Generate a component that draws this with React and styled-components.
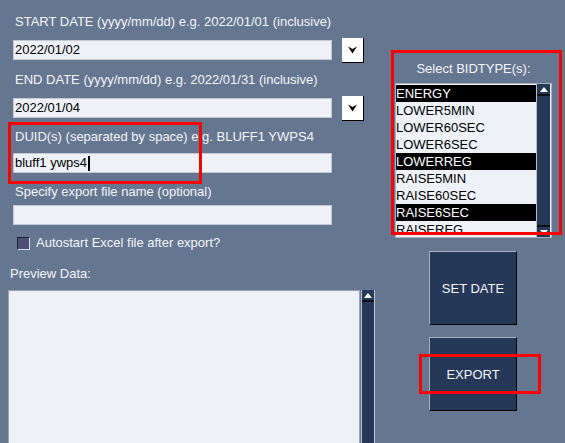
import React from 'react';
import styled, { createGlobalStyle } from 'styled-components';

const Global = createGlobalStyle`
  html, body { margin: 0; padding: 0; background: #657690; }
  body { font-family: "Liberation Sans", Arial, sans-serif; font-size: 13px; overflow: hidden; }
`;

const Page = styled.div`
  position: relative;
  width: 565px;
  height: 443px;
  overflow: hidden;
  background: #657690;
  display: grid;
  grid-template-columns: 380px 185px;
`;

const LeftCol = styled.div`
  display: flex;
  flex-direction: column;
`;

const RightCol = styled.div`
  display: flex;
  flex-direction: column;
`;

const Label = styled.div`
  color: #f3f5f8;
  line-height: 16px;
  height: 16px;
  white-space: nowrap;
  margin-top: ${p => p.$mt}px;
  padding-left: ${p => p.$pl ?? 15}px;
`;

const FieldRow = styled.div`
  display: flex;
  align-items: center;
  gap: 10px;
  height: 20px;
  margin-top: ${p => p.$mt}px;
  padding-left: 13px;
`;

const TextBox = styled.div`
  box-sizing: border-box;
  width: 319px;
  height: 20px;
  background: #eef1f6;
  border: 1px solid #c3c8d1;
  padding: 0 1px;
  line-height: 18px;
  color: #000;
  white-space: nowrap;
  display: flex;
  align-items: center;
`;

const Caret = styled.span`
  display: inline-block;
  width: 2px;
  height: 15px;
  background: #000;
  margin-left: 1px;
`;

const DropButton = styled.div`
  box-sizing: border-box;
  flex: none;
  width: 22px;
  height: 25px;
  background: #fff;
  border-right: 1px solid #000;
  border-bottom: 1px solid #000;
  display: flex;
  align-items: center;
  justify-content: center;
`;

const CheckRow = styled.div`
  display: flex;
  align-items: center;
  gap: 6px;
  height: 16px;
  margin-top: ${p => p.$mt}px;
  padding-left: 17px;
  color: #f3f5f8;
  line-height: 16px;
  white-space: nowrap;
`;

const CheckBox = styled.span`
  box-sizing: border-box;
  width: 13px;
  height: 13px;
  background: #4e4f74;
  border-top: 1px solid #1f2230;
  border-left: 1px solid #1f2230;
  border-right: 1px solid #d8dde6;
  border-bottom: 1px solid #d8dde6;
`;

const PreviewWrap = styled.div`
  display: flex;
  gap: 1px;
  margin-top: ${p => p.$mt}px;
  padding-left: 8px;
  height: 200px;
`;

const TextArea = styled.div`
  box-sizing: border-box;
  width: 352px;
  background: #eef1f6;
  border: 1px solid #9aa3b0;
`;

const ScrollBar = styled.div`
  box-sizing: border-box;
  flex: none;
  width: ${p => p.$w}px;
  background: #263857;
  border-left: 1px solid #b9c1cc;
  border-right: 1px solid ${p => p.$rb || '#c3cad4'};
  display: flex;
  flex-direction: column;
  justify-content: space-between;
`;

const ArrowBtn = styled.div`
  height: 10px;
  display: flex;
  align-items: center;
  justify-content: center;
  background: #263857;
  border-${p => (p.$down ? 'top' : 'bottom')}: 2px solid #0d0f14;
`;

const BidPanel = styled.div`
  display: flex;
  flex-direction: column;
  align-items: center;
  margin-left: 15px;
  width: 157px;
`;

const PanelLabel = styled.div`
  color: #f3f5f8;
  line-height: 16px;
  height: 16px;
  margin-top: 61px;
  white-space: nowrap;
`;

const ListBox = styled.div`
  box-sizing: border-box;
  margin-top: 6px;
  width: 157px;
  height: 155px;
  border: 1px solid #a8b0bd;
  background: #eef1f6;
  display: flex;
  overflow: hidden;
`;

const Items = styled.div`
  flex: 1;
  padding-top: 1px;
  overflow: hidden;
`;

const Item = styled.div`
  height: 17px;
  line-height: 17px;
  white-space: nowrap;
  background: ${p => (p.$sel ? '#000' : 'transparent')};
  color: ${p => (p.$sel ? '#fff' : '#000')};
`;

const ActionButton = styled.div`
  box-sizing: border-box;
  width: 88px;
  height: 74px;
  margin-left: 49px;
  margin-top: ${p => p.$mt}px;
  background: #263857;
  border-top: 1px solid #a7b0c1;
  border-left: 1px solid #a7b0c1;
  border-right: 1px solid #000;
  border-bottom: 1px solid #000;
  color: #f4f6fc;
  display: flex;
  align-items: center;
  justify-content: center;
  white-space: nowrap;
`;

const Highlight = styled.div`
  position: absolute;
  box-sizing: border-box;
  border: 3px solid #ff0000;
  left: ${p => p.$x}px;
  top: ${p => p.$y}px;
  width: ${p => p.$w}px;
  height: ${p => p.$h}px;
  pointer-events: none;
`;

const DownChevron = () => (
  <svg width="9" height="8" viewBox="0 0 9 8">
    <polygon points="0,0.5 4.5,3 9,0.5 4.5,7.5" fill="#000" />
  </svg>
);

const UpTri = () => (
  <svg width="8" height="5" viewBox="0 0 8 5">
    <polygon points="0,5 4,0 8,5" fill="#fff" />
  </svg>
);

const DownTri = () => (
  <svg width="8" height="5" viewBox="0 0 8 5">
    <polygon points="0,0 4,5 8,0" fill="#fff" />
  </svg>
);

const bidTypes = [
  { name: 'ENERGY', sel: true },
  { name: 'LOWER5MIN' },
  { name: 'LOWER60SEC' },
  { name: 'LOWER6SEC' },
  { name: 'LOWERREG', sel: true },
  { name: 'RAISE5MIN' },
  { name: 'RAISE60SEC' },
  { name: 'RAISE6SEC', sel: true },
  { name: 'RAISEREG' },
];

export default function App() {
  return (
    <>
      <Global />
      <Page>
        <LeftCol>
          <Label $mt={14}>START DATE (yyyy/mm/dd) e.g. 2022/01/01 (inclusive)</Label>
          <FieldRow $mt={10}>
            <TextBox>2022/01/02</TextBox>
            <DropButton><DownChevron /></DropButton>
          </FieldRow>
          <Label $mt={12}>END DATE (yyyy/mm/dd) e.g. 2022/01/31 (inclusive)</Label>
          <FieldRow $mt={10}>
            <TextBox>2022/01/04</TextBox>
            <DropButton><DownChevron /></DropButton>
          </FieldRow>
          <Label $mt={11}>DUID(s) (separated by space) e.g. BLUFF1 YWPS4</Label>
          <FieldRow $mt={8}>
            <TextBox>bluff1 ywps4<Caret /></TextBox>
          </FieldRow>
          <Label $mt={11}>Specify export file name (optional)</Label>
          <FieldRow $mt={5}>
            <TextBox />
          </FieldRow>
          <CheckRow $mt={10}>
            <CheckBox />
            Autostart Excel file after export?
          </CheckRow>
          <Label $mt={15} $pl={10}>Preview Data:</Label>
          <PreviewWrap $mt={8}>
            <TextArea />
            <ScrollBar $w={14}>
              <ArrowBtn><UpTri /></ArrowBtn>
            </ScrollBar>
          </PreviewWrap>
        </LeftCol>
        <RightCol>
          <BidPanel>
            <PanelLabel>Select BIDTYPE(s):</PanelLabel>
            <ListBox>
              <Items>
                {bidTypes.map(b => (
                  <Item key={b.name} $sel={b.sel}>{b.name}</Item>
                ))}
              </Items>
              <ScrollBar $w={15} $rb="#f2f4f8">
                <ArrowBtn><UpTri /></ArrowBtn>
                <ArrowBtn $down><DownTri /></ArrowBtn>
              </ScrollBar>
            </ListBox>
          </BidPanel>
          <ActionButton $mt={13}>SET DATE</ActionButton>
          <ActionButton $mt={12}>EXPORT</ActionButton>
        </RightCol>
        <Highlight $x={8} $y={122} $w={194} $h={62} />
        <Highlight $x={391} $y={50} $w={171} $h={185} />
        <Highlight $x={419} $y={354} $w={122} $h={40} />
      </Page>
    </>
  );
}
